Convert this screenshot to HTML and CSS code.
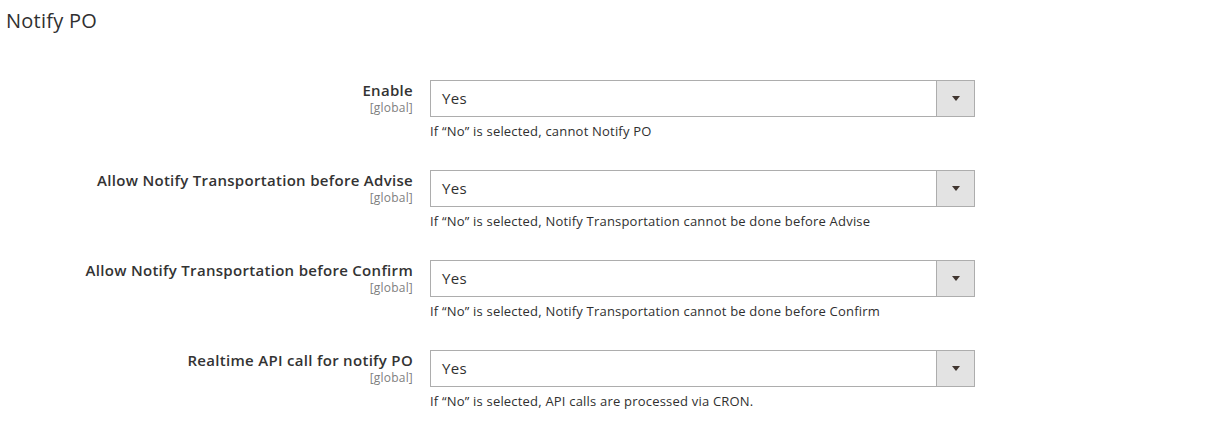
FILE: index.html
```html
<!DOCTYPE html>
<html lang="en">
<head>
<meta charset="utf-8">
<title>Notify PO</title>
<link rel="stylesheet" href="styles.css">
</head>
<body>
<div class="page">
  <h2 class="section-title">Notify PO</h2>
  <div class="fieldset">
    <div class="field">
      <div class="label"><span class="label-text">Enable</span><span class="scope">[global]</span></div>
      <div class="control">
        <div class="select"><span class="value">Yes</span><span class="arrow"><span class="tri"></span></span></div>
        <div class="note">If “No” is selected, cannot Notify PO</div>
      </div>
    </div>
    <div class="field">
      <div class="label"><span class="label-text">Allow Notify Transportation before Advise</span><span class="scope">[global]</span></div>
      <div class="control">
        <div class="select"><span class="value">Yes</span><span class="arrow"><span class="tri"></span></span></div>
        <div class="note">If “No” is selected, Notify Transportation cannot be done before Advise</div>
      </div>
    </div>
    <div class="field">
      <div class="label"><span class="label-text">Allow Notify Transportation before Confirm</span><span class="scope">[global]</span></div>
      <div class="control">
        <div class="select"><span class="value">Yes</span><span class="arrow"><span class="tri"></span></span></div>
        <div class="note">If “No” is selected, Notify Transportation cannot be done before Confirm</div>
      </div>
    </div>
    <div class="field">
      <div class="label"><span class="label-text">Realtime API call for notify PO</span><span class="scope">[global]</span></div>
      <div class="control">
        <div class="select"><span class="value">Yes</span><span class="arrow"><span class="tri"></span></span></div>
        <div class="note">If “No” is selected, API calls are processed via CRON.</div>
      </div>
    </div>
  </div>
</div>
</body>
</html>
```

FILE: styles.css
```css
* { box-sizing: border-box; }
html, body {
  margin: 0;
  padding: 0;
  background: #ffffff;
}
body {
  font-family: "Open Sans", "Liberation Sans", sans-serif;
  color: #303030;
}
.page {
  padding-top: 9px;
}
.section-title {
  margin: 0 0 47px 0;
  padding-left: 6px;
  font-size: 20px;
  line-height: 24px;
  font-weight: 400;
  letter-spacing: 0.25px;
  color: #303030;
}
.field {
  display: grid;
  grid-template-columns: 413px 545px;
  column-gap: 17px;
  margin-bottom: 31px;
}
.label {
  display: flex;
  flex-direction: column;
  align-items: flex-end;
  text-align: right;
  padding-top: 2px;
}
.label-text {
  font-size: 15px;
  line-height: 17px;
  font-weight: 600;
  letter-spacing: 0.3px;
  color: #333333;
}
.scope {
  margin-top: 2px;
  font-size: 12px;
  line-height: 13px;
  letter-spacing: 0.2px;
  color: #808080;
}
.select {
  display: flex;
  align-items: stretch;
  height: 37px;
  border: 1px solid #adadad;
  background: #ffffff;
}
.value {
  flex: 1;
  display: flex;
  align-items: center;
  padding-left: 11px;
  font-size: 15px;
  line-height: 17px;
  letter-spacing: 0.3px;
  color: #303030;
}
.arrow {
  width: 38px;
  display: flex;
  align-items: center;
  justify-content: center;
  background: #e3e3e3;
  border-left: 1px solid #adadad;
}
.tri {
  width: 0;
  height: 0;
  border-left: 4.5px solid transparent;
  border-right: 4.5px solid transparent;
  border-top: 5px solid #41362f;
}
.note {
  margin-top: 6px;
  font-size: 13px;
  line-height: 16px;
  letter-spacing: 0.2px;
  color: #303030;
}
```
